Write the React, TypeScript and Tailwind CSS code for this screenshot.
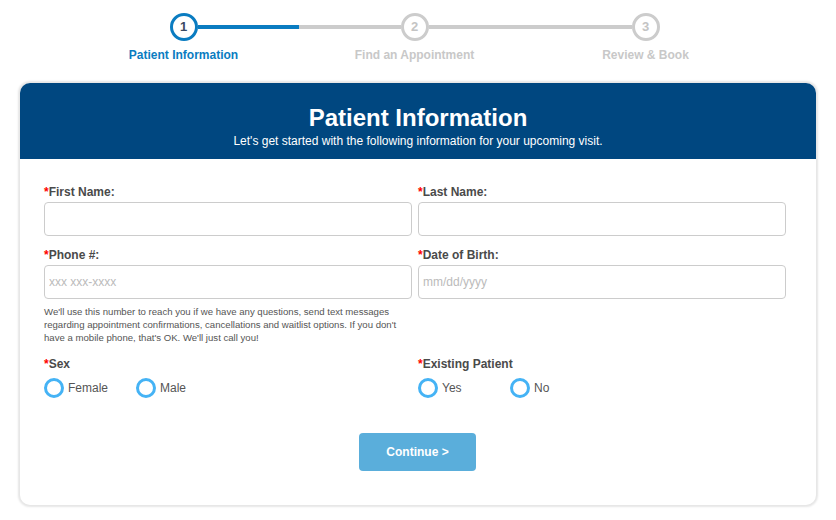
const FONT = { fontFamily: '"Liberation Sans", Arial, sans-serif' };

const STEPS = [
  { n: 1, label: 'Patient Information' },
  { n: 2, label: 'Find an Appointment' },
  { n: 3, label: 'Review & Book' },
];

function Stepper() {
  return (
    <div className="ml-[68px] grid w-[693px] grid-cols-3 pt-[13px]">
      {STEPS.map((s, i) => {
        const active = i === 0;
        const left = i === 0 ? 'bg-transparent' : 'bg-[#cccccc]';
        const right = i === 2 ? 'bg-transparent' : i === 0 ? 'bg-[#0a7cc1]' : 'bg-[#cccccc]';
        return (
          <div key={s.n} className="flex flex-col items-center">
            <div className="flex w-full items-center">
              <div className={`h-[4px] flex-1 ${left}`} />
              <div
                className={`flex h-[28px] w-[28px] items-center justify-center rounded-full border-[3.5px] bg-white text-[13px] font-bold ${
                  active ? 'border-[#0a7cc1] text-[#3b4a63]' : 'border-[#cccccc] text-[#c4c4c4]'
                }`}
              >
                {s.n}
              </div>
              <div className={`h-[4px] flex-1 ${right}`} />
            </div>
            <div
              className={`mt-[7px] text-[12px] font-bold leading-[14px] ${
                active ? 'text-[#0a7cc1]' : 'text-[#c8c8c8]'
              }`}
            >
              {s.label}
            </div>
          </div>
        );
      })}
    </div>
  );
}

function Label({ children }: { children: React.ReactNode }) {
  return (
    <div className="mb-[3px] text-[12px] font-bold leading-[14px] text-[#4a4a4a]">
      <span className="text-[#ff0000]">*</span>
      {children}
    </div>
  );
}

function Field({ label, placeholder }: { label: string; placeholder?: string }) {
  return (
    <div>
      <Label>{label}</Label>
      <input
        placeholder={placeholder}
        className="h-[34px] w-full rounded-[4px] border border-[#cccccc] bg-white px-[4px] text-[12px] text-[#333] outline-none placeholder:text-[#bbbbbb]"
        style={FONT}
      />
    </div>
  );
}

function Radio({ label }: { label: string }) {
  return (
    <label className="flex w-[92px] items-center gap-[4px] text-[12px] text-[#555]">
      <span className="h-[20px] w-[20px] rounded-full border-[3px] border-[#45b3f5] bg-white" />
      {label}
    </label>
  );
}

function RadioGroup({ label, options }: { label: string; options: string[] }) {
  return (
    <div>
      <Label>{label}</Label>
      <div className="mt-[7px] flex">
        {options.map((o) => (
          <Radio key={o} label={o} />
        ))}
      </div>
    </div>
  );
}

export default function App() {
  return (
    <div className="h-[520px] w-[836px] bg-white" style={FONT}>
      <Stepper />
      <div className="mx-[20px] mt-[21px] overflow-hidden rounded-[10px] bg-white shadow-[0_0_2px_2px_rgba(0,0,0,0.10)]">
        <div className="flex h-[76px] flex-col items-center bg-[#004780] pt-[21px] text-white">
          <h1 className="text-[24px] font-bold leading-[28px]">Patient Information</h1>
          <p className="mt-[2px] text-[12px] leading-[14px]">
            Let's get started with the following information for your upcoming visit.
          </p>
        </div>
        <div className="pb-[34px] pl-[24px] pr-[30px] pt-[26px]">
          <div className="grid grid-cols-2 gap-x-[6px] gap-y-[12px]">
            <Field label="First Name:" />
            <Field label="Last Name:" />
            <div>
              <Field label="Phone #:" placeholder="xxx xxx-xxxx" />
              <p className="mt-[6px] text-[9.6px] leading-[13px] text-[#555]">
                We'll use this number to reach you if we have any questions, send text messages
                regarding appointment confirmations, cancellations and waitlist options. If you don't
                have a mobile phone, that's OK. We'll just call you!
              </p>
            </div>
            <Field label="Date of Birth:" placeholder="mm/dd/yyyy" />
          </div>
          <div className="mt-[13px] grid grid-cols-2 gap-x-[6px]">
            <RadioGroup label="Sex" options={['Female', 'Male']} />
            <RadioGroup label="Existing Patient" options={['Yes', 'No']} />
          </div>
          <div className="mt-[35px] flex justify-center pl-[5px]">
            <button className="h-[38px] w-[117px] rounded-[4px] bg-[#5aaedb] text-[12px] font-bold text-white">
              Continue &gt;
            </button>
          </div>
        </div>
      </div>
    </div>
  );
}
